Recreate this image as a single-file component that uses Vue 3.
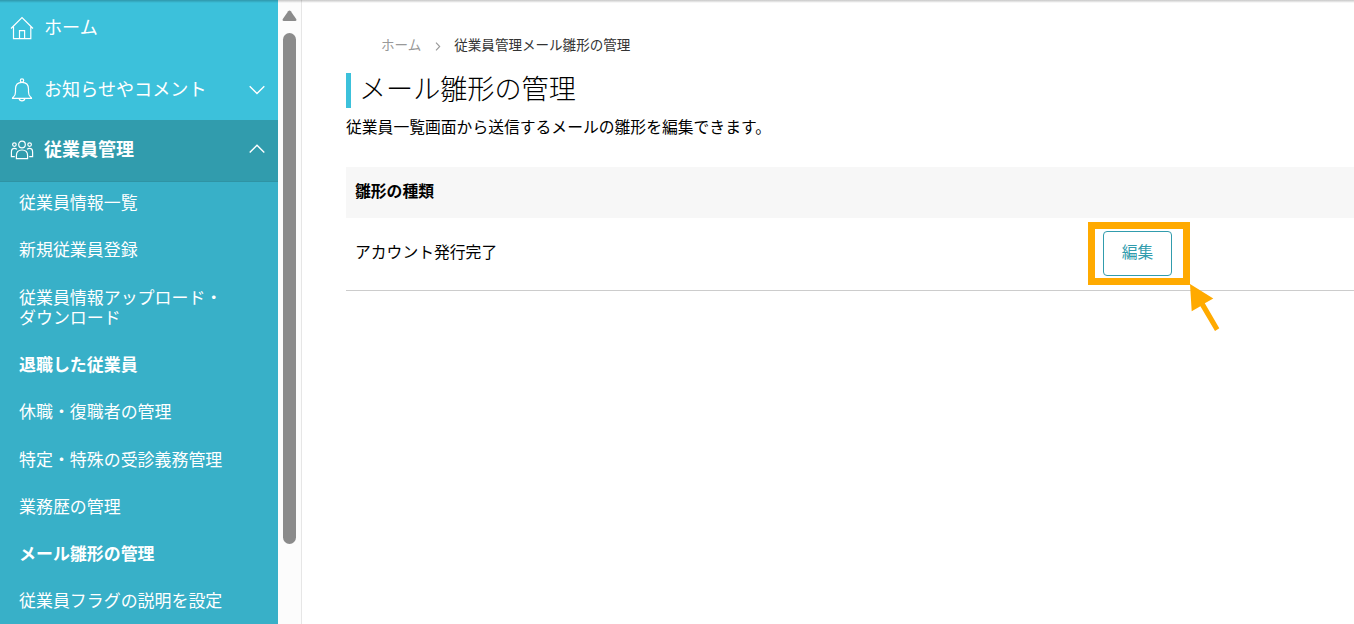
<script setup>
import { ref } from 'vue';

const subMenu = ref([
  { label: '従業員情報一覧' },
  { label: '新規従業員登録' },
  { label: '従業員情報アップロード・ダウンロード' },
  { label: '退職した従業員', bold: true },
  { label: '休職・復職者の管理' },
  { label: '特定・特殊の受診義務管理' },
  { label: '業務歴の管理' },
  { label: 'メール雛形の管理', bold: true },
  { label: '従業員フラグの説明を設定' },
]);

const templates = ref([{ name: 'アカウント発行完了' }]);
</script>

<template>
  <div class="app">
    <nav class="sidebar">
      <a class="nav-item nav-home">
        <svg class="nav-icon" width="24" height="24" viewBox="0 0 24 24">
          <path d="M1 12.5 L12 1.5 L23 12.5 M3.5 10.7 V22.7 H20.8 V10.7 M9.5 22.7 V14.7 H14.6 V22.7" />
        </svg>
        <span class="nav-label">ホーム</span>
      </a>
      <a class="nav-item">
        <svg class="nav-icon" width="24" height="24" viewBox="0 0 24 24">
          <circle cx="12" cy="2.6" r="1.7" />
          <path d="M2.5 20.4 Q2.5 19.6 3.4 19 Q5.5 17.4 5.5 14 V11 Q5.5 4.3 12 4.3 T18.5 11 V14 Q18.5 17.4 20.6 19 Q21.5 19.6 21.5 20.4 Z" />
          <path d="M9.2 20.6 Q9.5 22.8 12 22.8 T14.8 20.6" />
        </svg>
        <span class="nav-label">お知らせやコメント</span>
        <svg class="chevron" width="16" height="10" viewBox="0 0 16 10"><path d="M.7 1.2 L8 8.5 L15.3 1.2" /></svg>
      </a>
      <a class="nav-item active">
        <svg class="nav-icon" width="24" height="24" viewBox="0 0 24 24">
          <circle cx="12" cy="6.5" r="3.3" />
          <path d="M6.4 20.6 V17.4 Q6.4 12 12 12 T17.6 17.4 V20.6 Z" />
          <circle cx="4.4" cy="6.6" r="1.8" />
          <circle cx="19.6" cy="6.6" r="1.8" />
          <path d="M4.8 18.6 H1.4 V14 Q1.4 10.4 4.5 10.4 Q6 10.4 6.9 11.3 M19.2 18.6 H22.6 V14 Q22.6 10.4 19.5 10.4 Q18 10.4 17.1 11.3" />
        </svg>
        <span class="nav-label">従業員管理</span>
        <svg class="chevron" width="16" height="10" viewBox="0 0 16 10"><path d="M.7 8.5 L8 1.2 L15.3 8.5" /></svg>
      </a>
      <ul class="sub-menu">
        <li v-for="item in subMenu" :key="item.label" :class="{ bold: item.bold }">{{ item.label }}</li>
      </ul>
    </nav>

    <div class="scrollbar">
      <svg width="15" height="12" viewBox="0 0 15 12">
        <path d="M6.2 1.2 Q7.5 -.4 8.8 1.2 L14.2 9 Q15 11 13.2 11 H1.8 Q0 11 .8 9 Z" fill="#8b8b8b" />
      </svg>
      <div class="thumb"></div>
    </div>

    <main class="content">
      <div class="breadcrumb">
        <span class="crumb-home">ホーム</span>
        <svg width="6" height="9" viewBox="0 0 6 9"><path d="M1 .7 L4.7 4.5 L1 8.3" /></svg>
        <span>従業員管理メール雛形の管理</span>
      </div>
      <h1>メール雛形の管理</h1>
      <p class="lead">従業員一覧画面から送信するメールの雛形を編集できます。</p>

      <div class="table">
        <div class="table-head">雛形の種類</div>
        <div v-for="row in templates" :key="row.name" class="table-row">
          <span class="row-name">{{ row.name }}</span>
          <div class="row-action">
            <button class="edit-btn">編集</button>
            <div class="highlight"></div>
            <svg class="pointer" width="30" height="48" viewBox="0 0 30 48">
              <path d="M0 0 L23.3 14.5 L14.8 19.3 L29.3 44.3 L25 47 L10.4 22.2 L1.7 27.3 Z" fill="#ffaa00" />
            </svg>
          </div>
        </div>
      </div>
    </main>
    <div class="top-shadow"></div>
  </div>
</template>

<style>
body {
  margin: 0;
  overflow: hidden;
}
</style>

<style scoped>
.app {
  position: relative;
  display: flex;
  height: 624px;
  overflow: hidden;
  background: #fff;
  color: #000;
  font-family: 'Noto Sans CJK JP', sans-serif;
}
.top-shadow {
  position: absolute;
  top: 0;
  left: 0;
  right: 0;
  height: 3px;
  background: linear-gradient(rgba(0, 0, 0, 0.22), rgba(0, 0, 0, 0));
}

/* Sidebar */
.sidebar {
  flex: 0 0 278px;
  background: #3cc1db;
  color: #fff;
}
.nav-item {
  display: flex;
  align-items: center;
  box-sizing: border-box;
  height: 60px;
  padding: 0 13.5px 0 10px;
  font-size: 18.1px;
  line-height: 20px;
}
.nav-home {
  padding-bottom: 4px;
}
.nav-item.active {
  height: 62px;
  padding-bottom: 2px;
  background: #319cad;
  border-bottom: 1px solid #2f93a4;
  font-size: 18px;
  font-weight: 700;
}
.nav-icon {
  flex: none;
  margin-right: 10px;
}
.nav-icon path,
.nav-icon circle,
.chevron path {
  fill: none;
  stroke: #fff;
  stroke-width: 1.2;
}
.nav-label {
  flex: 1;
  padding-bottom: 4px;
}
.active .chevron {
  margin-bottom: 2px;
}
.chevron path {
  stroke-width: 1.4;
}
.sub-menu {
  height: 442px;
  margin: 0;
  padding: 0;
  list-style: none;
  background: #38b0c8;
}
.sub-menu li {
  padding: 13.5px 48px 13.5px 19px;
  font-size: 16.95px;
  line-height: 20.25px;
}
.sub-menu li:first-child {
  padding-top: 10px;
}
.sub-menu .bold {
  font-weight: 700;
}

.scrollbar {
  flex: 0 0 23px;
  display: flex;
  flex-direction: column;
  align-items: center;
  gap: 11px;
  padding-top: 10px;
  background: #fcfcfc;
  border-right: 1px solid #e6e6e6;
}
.thumb {
  width: 13px;
  height: 511px;
  border-radius: 7px;
  background: #8b8b8b;
}

/* Content */
.content {
  flex: 1;
  min-width: 0;
  padding: 34px 0 0 44px;
}
.breadcrumb {
  display: flex;
  align-items: center;
  height: 20px;
  padding-left: 35px;
  font-size: 13.55px;
  color: #333;
}
.breadcrumb svg {
  margin: 5px 13px 0 14px;
}
.breadcrumb path {
  fill: none;
  stroke: #999;
  stroke-width: 1.1;
}
.crumb-home {
  color: #999;
}
h1 {
  height: 35px;
  margin: 19px 0 0;
  padding-left: 8px;
  border-left: 5px solid #3cc1db;
  font-size: 27.1px;
  font-weight: 300;
  line-height: 29px;
}
.lead {
  margin: 7px 0 0;
  font-size: 15.8px;
  line-height: 24px;
}
.table {
  margin-top: 28px;
  font-size: 15.8px;
}
.table-head {
  height: 51px;
  padding-left: 9px;
  background: #f7f7f7;
  font-weight: 700;
  line-height: 47px;
}
.table-row {
  display: flex;
  align-items: flex-start;
  justify-content: space-between;
  box-sizing: border-box;
  height: 73px;
  padding: 13px 182px 0 9px;
  border-bottom: 1px solid #ccc;
}
.row-name {
  line-height: 41px;
}
.row-action {
  position: relative;
}
.edit-btn {
  display: block;
  width: 69px;
  height: 45px;
  padding: 0 0 5px;
  border: 1px solid #319cad;
  border-radius: 4px;
  background: #fff;
  color: #319cad;
  font-family: inherit;
  font-size: 15.8px;
}
.highlight {
  position: absolute;
  top: -9px;
  left: -15px;
  box-sizing: border-box;
  width: 102px;
  height: 63px;
  border: 7px solid #ffaa00;
}
.pointer {
  position: absolute;
  top: 53px;
  left: 86.5px;
}
</style>
